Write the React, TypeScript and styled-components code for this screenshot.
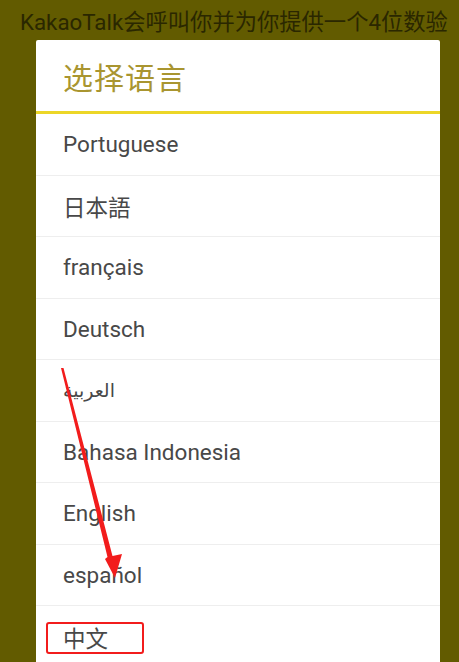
import React from 'react';
import styled, { createGlobalStyle } from 'styled-components';

const GlobalStyle = createGlobalStyle`
  html, body {
    margin: 0;
    padding: 0;
    height: 100%;
    overflow: hidden;
    background: #625b00;
  }
`;

const Screen = styled.div`
  position: relative;
  width: 459px;
  height: 662px;
  overflow: hidden;
  background: #625b00;
  font-family: Roboto, "Noto Sans CJK SC", sans-serif;
`;

const Hint = styled.div`
  height: 40px;
  padding-left: 20px;
  font-family: Roboto, "Noto Sans CJK SC", sans-serif;
  font-size: 22.3px;
  line-height: 44px;
  color: #2a2700;
  white-space: nowrap;
`;

const Dialog = styled.div`
  margin-left: 36px;
  width: 404px;
  background: #fff;
  border-radius: 2px 2px 0 0;
`;

const Header = styled.div`
  height: 71px;
  padding-left: 27px;
  display: flex;
  align-items: center;
  border-bottom: 3px solid #ecd627;
`;

const Title = styled.h2`
  margin: 0;
  font-family: "Noto Sans CJK SC", sans-serif;
  font-weight: 400;
  font-size: 30px;
  color: #a99530;
  letter-spacing: 1px;
`;

const Item = styled.div<{ $last?: boolean }>`
  height: 61.5px;
  box-sizing: border-box;
  padding-left: 27px;
  display: flex;
  align-items: center;
  font-size: 22.5px;
  color: #484848;
  border-bottom: ${(p) => (p.$last ? 'none' : '1px solid #eeeeee')};
`;

const Arabic = styled.span`
  font-family: "Noto Sans", "DejaVu Sans", sans-serif;
  font-size: 19px;
`;

const Mark = styled.div`
  position: absolute;
  left: 46px;
  top: 622px;
  width: 98px;
  height: 32px;
  box-sizing: border-box;
  border: 2.5px solid #f21c1c;
  border-radius: 3px;
`;

const Arrow = styled.svg`
  position: absolute;
  left: 0;
  top: 0;
  pointer-events: none;
`;

const languages = [
  'Portuguese',
  '日本語',
  'français',
  'Deutsch',
  'العربية',
  'Bahasa Indonesia',
  'English',
  'español',
  '中文',
];

export default function App() {
  return (
    <>
      <GlobalStyle />
      <Screen>
        <Hint>KakaoTalk会呼叫你并为你提供一个4位数验</Hint>
        <Dialog>
          <Header>
            <Title>选择语言</Title>
          </Header>
          {languages.map((lang, i) => (
            <Item key={i} $last={i === languages.length - 1}>
              {lang === 'العربية' ? <Arabic>{lang}</Arabic> : lang}
            </Item>
          ))}
        </Dialog>
        <Arrow width="459" height="662" viewBox="0 0 459 662">
          <polygon
            points="61,368 63.5,368 112.5,556 122,554 115,578 105,559 107.5,557"
            fill="#f21c1c"
          />
        </Arrow>
        <Mark />
      </Screen>
    </>
  );
}
